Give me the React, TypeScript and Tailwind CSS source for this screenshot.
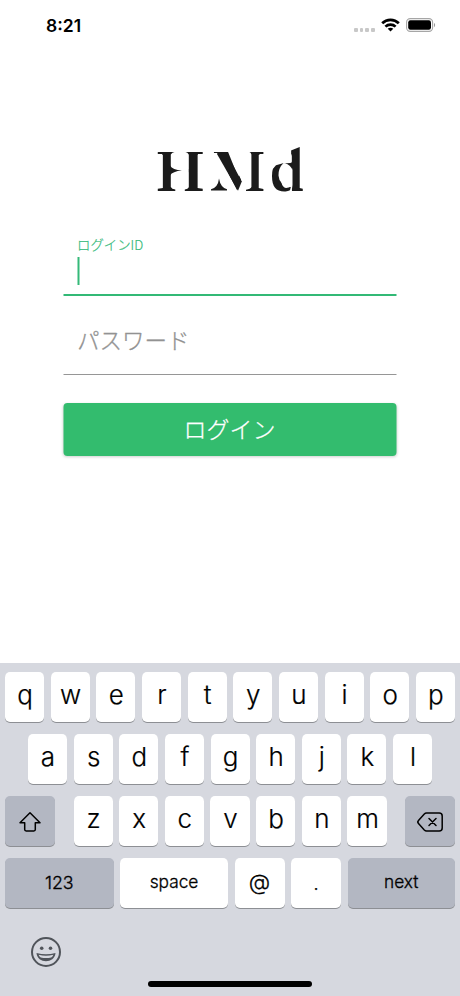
import type { ReactNode } from "react";

const latin = "font-['Inter','Liberation_Sans',sans-serif]";
const japanese = "font-['Noto_Sans_CJK_JP',sans-serif]";

function Key({ children, className = "" }: { children: ReactNode; className?: string }) {
  return (
    <button
      type="button"
      className={`flex h-[50px] items-center justify-center rounded-[5px] text-black shadow-[0_1px_0_#8d8f94] ${className}`}
    >
      {children}
    </button>
  );
}

function LetterRow({ letters, className }: { letters: string; className: string }) {
  return (
    <div className={`flex gap-[6.6px] ${className}`}>
      {letters.split("").map((letter) => (
        <Key key={letter} className="min-w-0 flex-1 bg-white pb-[5px] pl-px text-[26px] font-light [-webkit-text-stroke:0.2px_#000]">
          {letter}
        </Key>
      ))}
    </div>
  );
}

function StatusBar() {
  return (
    <header className="flex h-[50px] items-center justify-between pl-[46px] pr-[24px]">
      <span className="pt-[2px] text-[17.5px] font-semibold leading-none text-black">8:21</span>
      <div className="flex items-center">
        <div className="mt-[10px] flex gap-[2px]">
          {[0, 1, 2, 3].map((dot) => (
            <span key={dot} className="size-[3.8px] rounded-[1px] bg-[#c8c8c8]" />
          ))}
        </div>
        <svg className="ml-[6px]" width="19" height="14" viewBox="0 0 19 14" fill="none" stroke="#000" strokeWidth="2.7">
          <path d="M1.2 5.3C5.8.7 13.2.7 17.8 5.3" />
          <path d="M4.4 8.6C7.2 5.9 11.8 5.9 14.6 8.6" />
          <path d="M9.5 13.5 6.7 10.7C8.3 9.3 10.7 9.3 12.3 10.7Z" fill="#000" stroke="none" />
        </svg>
        <svg className="ml-[6px]" width="30" height="14" viewBox="0 0 30 14">
          <rect x=".6" y=".6" width="26" height="12.8" rx="3.6" fill="none" stroke="#a6a6a6" strokeWidth="1.1" />
          <rect x="2.2" y="2.2" width="22.8" height="9.6" rx="2.2" fill="#000" />
          <path d="M28 5v4.2c1.5-.6 1.5-3.6 0-4.2Z" fill="#999" />
        </svg>
      </div>
    </header>
  );
}

function Logo() {
  return (
    <svg
      className="mx-auto block font-['Liberation_Serif',serif] font-bold"
      width="170"
      height="90"
      viewBox="145 125 170 90"
      fill="#1b1b1b"
    >
      <text x="156.8" y="190.5" fontSize="60" textLength="47" lengthAdjust="spacingAndGlyphs">H</text>
      <path d="M170.8 154.5q1-2 4.5-2.8v-2h9.5v2q3.2.8 3.9 2.8v32.5q-.7 2-3.9 2.6v2h-9.5v-2q-3.5-.6-4.5-2.6Z" fill="#fff" />
      <path d="M156 154h6v33h-6ZM198 154h7v33h-7Z" fill="#fff" />
      <path d="M170 165.5Q172.5 169.8 182 170.5Q172.5 171.3 170 175.5Z" />
      <text x="213" y="190.5" fontSize="60" textLength="52" lengthAdjust="spacingAndGlyphs">M</text>
      <path d="M210 153h6.8l2.2 2.5 18.5 35.5v2H210ZM227.3 149l14.5 32.5-4.3 9.5v1h8.5v-2.3q4.5-.7 5.4-2.7V154.5q-.3-2-2.4-2.8V149ZM259.5 154h7v33h-7Z" fill="#fff" />
      <path d="M217 154l9-2 15.8 29.5-3.8 9.2Z" />
      <path d="M211 190.5v-1.2Q218 187.5 219 178.5Q220.5 187.5 227 189.3v1.2Z" />
      <text x="269.5" y="190.5" fontSize="65" textLength="34" lengthAdjust="spacingAndGlyphs">d</text>
      <path d="M285 144h16v2.6l-12 4.6h-4Z" fill="#fff" />
      <path d="M284 153.5h6q1.8.4 1.8 2.5v7.5L283 163.2l-7 2-5 5.8h-3V157h16Z" fill="#fff" />
      <path d="M283.5 163q7.5 0 9 6v16l-1 7.5h-2l1.3-5.5Q279 185 278.5 175.5 278.3 168 283.5 163Z" fill="#fff" />
      <path d="M285 163.2Q290 163.8 292.6 162V170Q290.5 165 285 163.2Z" />
    </svg>
  );
}

function LoginForm() {
  return (
    <form className={`mx-auto mt-[21px] w-[333px] -translate-x-[0.5px] ${japanese}`}>
      <div className="h-[60px] border-b-2 border-[#32b976] pl-[14px]">
        <label className="block h-[20px] text-[13.4px] font-light leading-[17px] text-[#35b979] [-webkit-text-stroke:0.2px_#35b979]">
          ログインID
        </label>
        <div className="mt-[1px] h-[28px] w-[2px] bg-[#35b979]" />
      </div>
      <div className="flex h-[79px] items-center border-b border-[#969696] pl-[14px] pt-[9px]">
        <label className="text-[22.5px] font-light leading-none text-[#929292] [-webkit-text-stroke:0.3px_#929292]">パスワード</label>
      </div>
      <button
        type="button"
        className="mt-[28px] flex h-[53px] w-full items-center justify-center rounded-[4px] bg-[#33bc6e] pb-[3px] text-[23px] font-light leading-none text-white shadow-[0_1px_3px_#00000030] [-webkit-text-stroke:0.25px_#fff]"
      >
        ログイン
      </button>
    </form>
  );
}

function Keyboard() {
  return (
    <section className="flex h-[333px] flex-col bg-[#d6d8df] px-[5px] pt-[9px]">
      <div className="flex flex-col gap-[12px]">
        <LetterRow letters="qwertyuiop" className="" />
        <LetterRow letters="asdfghjkl" className="px-[23px]" />
        <div className="flex justify-between">
          <Key className="w-[50px] bg-[#b3b7c2]">
            <svg className="mt-[2px]" width="24" height="22" viewBox="0 0 24 22" fill="none" stroke="#000" strokeWidth="1.5" strokeLinejoin="round">
              <path d="M12 1.8 22 11.8h-4.7v6.8q0 1.4-1.4 1.4H8.1q-1.4 0-1.4-1.4v-6.8H2Z" />
            </svg>
          </Key>
          <LetterRow letters="zxcvbnm" className="w-[313px]" />
          <Key className="w-[50px] bg-[#b3b7c2]">
            <svg className="mt-[1px]" width="28" height="22" viewBox="0 0 28 22" fill="none" stroke="#000" strokeWidth="1.5" strokeLinejoin="round" strokeLinecap="round">
              <path d="M10.5 2h12.7q3 0 3 3v12q0 3-3 3H10.5q-1.2 0-2.2-1L2.5 12.5q-1.4-1.5 0-3L8.3 3q1-1 2.2-1Z" />
              <path d="m13 7.5 7 7m0-7-7 7" />
            </svg>
          </Key>
        </div>
        <div className="flex gap-[6.5px] font-light [-webkit-text-stroke:0.3px_#000]">
          <Key className="w-[108.5px] bg-[#b3b7c2] text-[17.8px]">123</Key>
          <Key className="w-[108px] bg-white pb-[2px] text-[17.3px]">space</Key>
          <Key className="w-[50px] bg-white pb-[2px] text-[22px]">@</Key>
          <Key className="w-[50px] bg-white text-[18px]">.</Key>
          <Key className="flex-1 bg-[#b3b7c2] pb-[2px] text-[17.3px]">next</Key>
        </div>
      </div>
      <svg className="ml-[25px] mt-[28px]" width="32" height="32" viewBox="0 0 32 32" fill="#50545a">
        <circle cx="16" cy="16" r="14" fill="none" stroke="#50545a" strokeWidth="2" />
        <circle cx="11.7" cy="12.2" r="1.8" />
        <circle cx="20.5" cy="12.2" r="1.8" />
        <path d="M6.5 17q9.5 2.6 19 0c-.8 11-18.2 11-19 0Z" />
        <path d="M8.6 18.8q7.4 1.8 14.8 0-.8 2-2.2 2.7-5.2 1-10.4 0-1.4-.7-2.2-2.7Z" fill="#d6d8df" />
      </svg>
      <div className="mx-auto mt-[13px] h-[5.5px] w-[164px] rounded-full bg-black" />
    </section>
  );
}

export default function App() {
  return (
    <main className={`flex h-[996px] w-[460px] flex-col overflow-hidden bg-white ${latin}`}>
      <StatusBar />
      <div className="flex-1 pt-[75px]">
        <Logo />
        <LoginForm />
      </div>
      <Keyboard />
    </main>
  );
}
